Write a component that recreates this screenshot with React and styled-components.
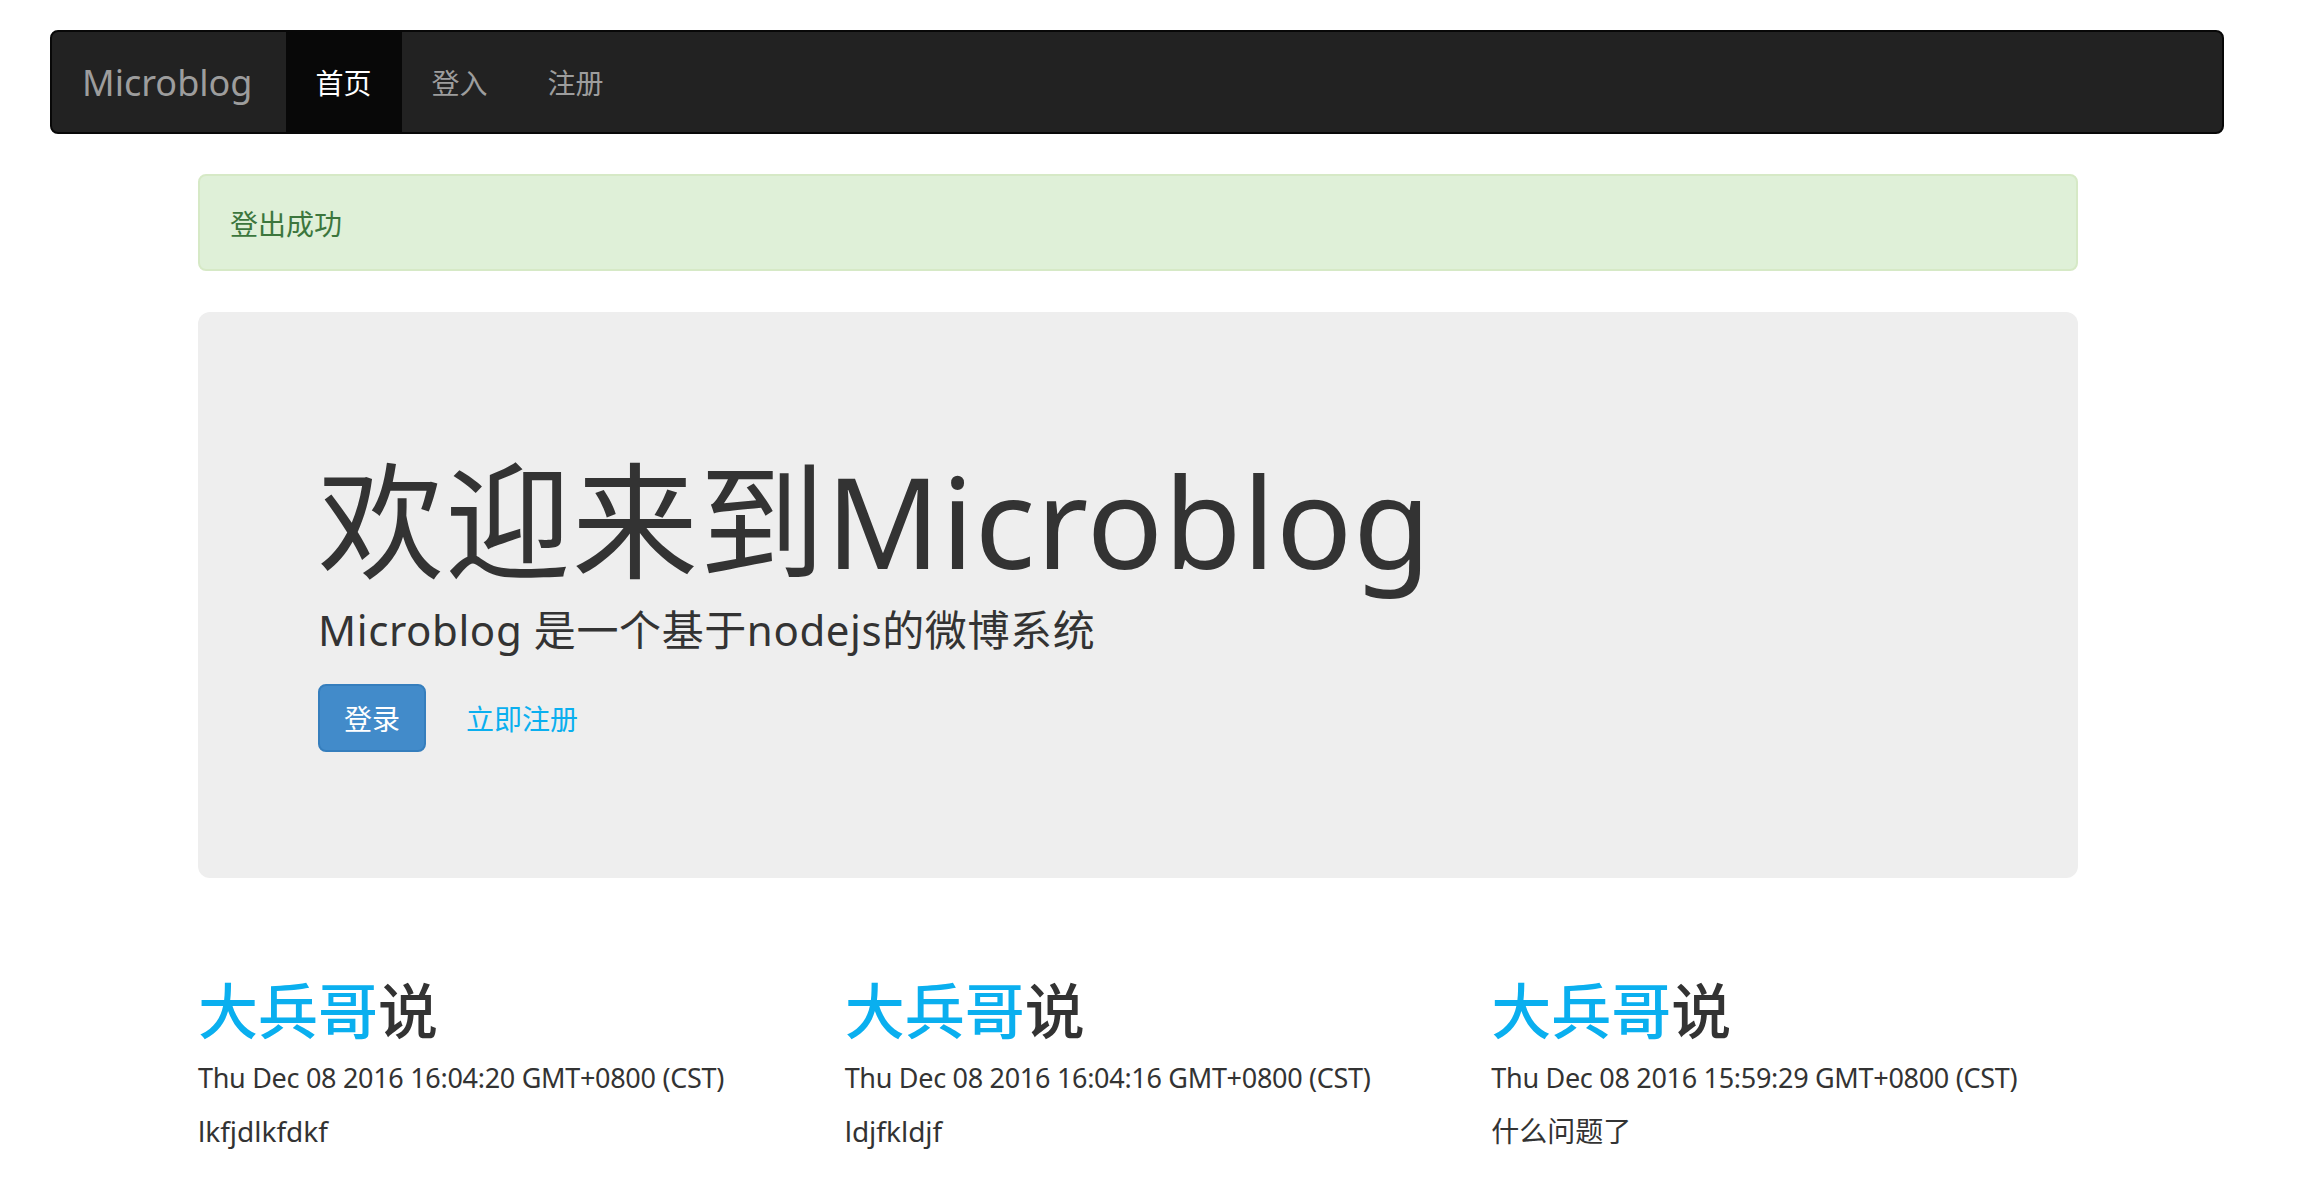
import React from 'react'
import styled, { createGlobalStyle } from 'styled-components'

const GlobalStyle = createGlobalStyle`
    body {
        margin: 0;
        background: #fff;
        color: #333;
        font-family: 'Noto Sans', 'Noto Sans CJK SC', sans-serif;
    }
`

const Page = styled.div`
    padding-top: 30px;
`

const NavBar = styled.nav`
    display: flex;
    align-items: stretch;
    height: 104px;
    box-sizing: border-box;
    margin: 0 86px 40px 50px;
    background: #222;
    border: 2px solid #080808;
    border-radius: 8px;
`

const Brand = styled.a`
    display: flex;
    align-items: center;
    padding: 0 33px 0 30px;
    font-size: 36px;
    color: #9d9d9d;
    text-decoration: none;
`

const NavList = styled.ul`
    display: flex;
    margin: 0;
    padding: 0;
    list-style: none;
`

const NavItem = styled.li`
    display: flex;
    align-items: center;
    padding: 0 30px;
    font-size: 28px;
    color: ${p => (p.active ? '#fff' : '#9d9d9d')};
    background: ${p => (p.active ? '#080808' : 'transparent')};
`

const Container = styled.main`
    width: 1880px;
    margin-left: 198px;
`

const Alert = styled.div`
    display: flex;
    align-items: center;
    height: 97px;
    box-sizing: border-box;
    padding: 0 30px;
    margin-bottom: 41px;
    background: #dff0d8;
    border: 2px solid #d6e9c6;
    border-radius: 8px;
    color: #3c763d;
    font-size: 28px;
`

const Jumbotron = styled.section`
    height: 566px;
    box-sizing: border-box;
    padding: 145px 120px 0;
    background: #eee;
    border-radius: 12px;
`

const HeroTitle = styled.h1`
    margin: 0;
    font-size: 126px;
    line-height: 126px;
    font-weight: 400;
    letter-spacing: 1px;
    color: #333;
`

const HeroText = styled.p`
    margin: 17px 0 24px;
    font-size: 42px;
    line-height: 60px;
    font-weight: 400;
    letter-spacing: 0.6px;
`

const Actions = styled.div`
    display: flex;
    align-items: center;
    gap: 40px;
`

const PrimaryButton = styled.a`
    display: flex;
    align-items: center;
    height: 68px;
    box-sizing: border-box;
    padding: 0 24px;
    background: #428bca;
    border: 2px solid #357ebd;
    border-radius: 8px;
    color: #fff;
    font-size: 28px;
    text-decoration: none;
`

const TextLink = styled.a`
    font-size: 28px;
    color: #0aafef;
    text-decoration: none;
`

const Posts = styled.div`
    display: grid;
    grid-template-columns: repeat(3, 646.67px);
    margin: 100px -30px 0;
`

const Post = styled.article`
    padding: 0 30px;
`

const PostTitle = styled.h2`
    margin: 0;
    font-size: 60px;
    line-height: 66px;
    font-weight: 500;

    a {
        color: #0aafef;
        text-decoration: none;
    }
`

const PostDate = styled.p`
    margin: 14px 0 0;
    font-size: 27px;
    line-height: 40px;
    letter-spacing: -0.3px;
`

const PostBody = styled.p`
    margin: 13px 0 0;
    font-size: 28px;
    line-height: 40px;
`

const posts = [
    { user: '大兵哥', time: 'Thu Dec 08 2016 16:04:20 GMT+0800 (CST)', text: 'lkfjdlkfdkf' },
    { user: '大兵哥', time: 'Thu Dec 08 2016 16:04:16 GMT+0800 (CST)', text: 'ldjfkldjf' },
    { user: '大兵哥', time: 'Thu Dec 08 2016 15:59:29 GMT+0800 (CST)', text: '什么问题了' },
]

export default function App() {
    return (
        <Page>
            <GlobalStyle />
            <NavBar>
                <Brand href="#">Microblog</Brand>
                <NavList>
                    <NavItem active>首页</NavItem>
                    <NavItem>登入</NavItem>
                    <NavItem>注册</NavItem>
                </NavList>
            </NavBar>

            <Container>
                <Alert>登出成功</Alert>

                <Jumbotron>
                    <HeroTitle>欢迎来到Microblog</HeroTitle>
                    <HeroText>Microblog 是一个基于nodejs的微博系统</HeroText>
                    <Actions>
                        <PrimaryButton href="#">登录</PrimaryButton>
                        <TextLink href="#">立即注册</TextLink>
                    </Actions>
                </Jumbotron>

                <Posts>
                    {posts.map((p, i) => (
                        <Post key={i}>
                            <PostTitle><a href="#">{p.user}</a>说</PostTitle>
                            <PostDate>{p.time}</PostDate>
                            <PostBody>{p.text}</PostBody>
                        </Post>
                    ))}
                </Posts>
            </Container>
        </Page>
    )
}
